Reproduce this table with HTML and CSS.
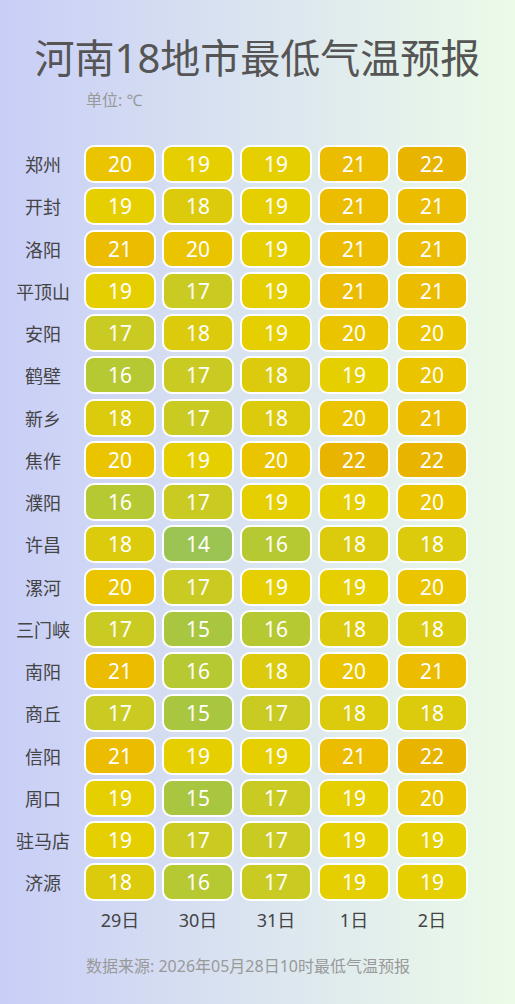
FILE: index.html
```html
<!DOCTYPE html>
<html lang="zh-CN">
<head>
  <meta charset="UTF-8">
  <title>河南18地市最低气温预报</title>
  <link rel="stylesheet" href="styles.css">
</head>
<body>
  <div class="page">
    <h1 class="title">河南18地市最低气温预报</h1>
    <div class="unit">单位: ℃</div>

    <div class="table">
      <div class="row"><div class="city">郑州</div><div class="cell t20">20</div><div class="cell t19">19</div><div class="cell t19">19</div><div class="cell t21">21</div><div class="cell t22">22</div></div>
      <div class="row"><div class="city">开封</div><div class="cell t19">19</div><div class="cell t18">18</div><div class="cell t19">19</div><div class="cell t21">21</div><div class="cell t21">21</div></div>
      <div class="row"><div class="city">洛阳</div><div class="cell t21">21</div><div class="cell t20">20</div><div class="cell t19">19</div><div class="cell t21">21</div><div class="cell t21">21</div></div>
      <div class="row"><div class="city">平顶山</div><div class="cell t19">19</div><div class="cell t17">17</div><div class="cell t19">19</div><div class="cell t21">21</div><div class="cell t21">21</div></div>
      <div class="row"><div class="city">安阳</div><div class="cell t17">17</div><div class="cell t18">18</div><div class="cell t19">19</div><div class="cell t20">20</div><div class="cell t20">20</div></div>
      <div class="row"><div class="city">鹤壁</div><div class="cell t16">16</div><div class="cell t17">17</div><div class="cell t18">18</div><div class="cell t19">19</div><div class="cell t20">20</div></div>
      <div class="row"><div class="city">新乡</div><div class="cell t18">18</div><div class="cell t17">17</div><div class="cell t18">18</div><div class="cell t20">20</div><div class="cell t21">21</div></div>
      <div class="row"><div class="city">焦作</div><div class="cell t20">20</div><div class="cell t19">19</div><div class="cell t20">20</div><div class="cell t22">22</div><div class="cell t22">22</div></div>
      <div class="row"><div class="city">濮阳</div><div class="cell t16">16</div><div class="cell t17">17</div><div class="cell t19">19</div><div class="cell t19">19</div><div class="cell t20">20</div></div>
      <div class="row"><div class="city">许昌</div><div class="cell t18">18</div><div class="cell t14">14</div><div class="cell t16">16</div><div class="cell t18">18</div><div class="cell t18">18</div></div>
      <div class="row"><div class="city">漯河</div><div class="cell t20">20</div><div class="cell t17">17</div><div class="cell t19">19</div><div class="cell t19">19</div><div class="cell t20">20</div></div>
      <div class="row"><div class="city">三门峡</div><div class="cell t17">17</div><div class="cell t15">15</div><div class="cell t16">16</div><div class="cell t18">18</div><div class="cell t18">18</div></div>
      <div class="row"><div class="city">南阳</div><div class="cell t21">21</div><div class="cell t16">16</div><div class="cell t18">18</div><div class="cell t20">20</div><div class="cell t21">21</div></div>
      <div class="row"><div class="city">商丘</div><div class="cell t17">17</div><div class="cell t15">15</div><div class="cell t17">17</div><div class="cell t18">18</div><div class="cell t18">18</div></div>
      <div class="row"><div class="city">信阳</div><div class="cell t21">21</div><div class="cell t19">19</div><div class="cell t19">19</div><div class="cell t21">21</div><div class="cell t22">22</div></div>
      <div class="row"><div class="city">周口</div><div class="cell t19">19</div><div class="cell t15">15</div><div class="cell t17">17</div><div class="cell t19">19</div><div class="cell t20">20</div></div>
      <div class="row"><div class="city">驻马店</div><div class="cell t19">19</div><div class="cell t17">17</div><div class="cell t17">17</div><div class="cell t19">19</div><div class="cell t19">19</div></div>
      <div class="row"><div class="city">济源</div><div class="cell t18">18</div><div class="cell t16">16</div><div class="cell t17">17</div><div class="cell t19">19</div><div class="cell t19">19</div></div>

      <div class="row dates"><div class="city"></div><div class="date">29日</div><div class="date">30日</div><div class="date">31日</div><div class="date">1日</div><div class="date">2日</div></div>
    </div>

    <div class="source">数据来源: 2026年05月28日10时最低气温预报</div>
  </div>
</body>
</html>
```

FILE: styles.css
```css
body {
  margin: 0;
  font-family: "Noto Sans", "Noto Sans CJK SC", sans-serif;
  background: linear-gradient(to right, #c9cef7, #ecfbe8);
  width: 515px;
  height: 1004px;
  overflow: hidden;
}

.page {
  padding-top: 34px;
}

.title {
  margin: 0;
  text-align: center;
  font-size: 40px;
  line-height: 48px;
  font-weight: normal;
  color: #555;
}

.unit {
  margin-top: 8px;
  padding-left: 86px;
  font-size: 16px;
  line-height: 20px;
  color: #999;
}

.table {
  margin-top: 35px;
  display: flex;
  flex-direction: column;
  gap: 4.25px;
}

.row {
  display: flex;
  align-items: center;
  gap: 6px;
  padding-left: 8px;
}

.city {
  width: 70px;
  text-align: center;
  font-size: 18px;
  color: #444;
}

.cell {
  width: 68px;
  height: 34px;
  border: 2px solid #fff;
  border-radius: 10px;
  color: #fff;
  font-size: 21px;
  line-height: 34px;
  text-align: center;
}

.t14 { background: #9cc452; }
.t15 { background: #a9c640; }
.t16 { background: #b7c932; }
.t17 { background: #c9cb22; }
.t18 { background: #dbcb0c; }
.t19 { background: #e6cf00; }
.t20 { background: #ebc400; }
.t21 { background: #ebbc00; }
.t22 { background: #e9b400; }

.dates {
  margin-top: 2px;
}

.date {
  width: 72px;
  text-align: center;
  font-size: 18px;
  line-height: 24px;
  color: #444;
}

.source {
  margin-top: 23px;
  padding-left: 86px;
  font-size: 16px;
  line-height: 22px;
  color: #999;
}
```
